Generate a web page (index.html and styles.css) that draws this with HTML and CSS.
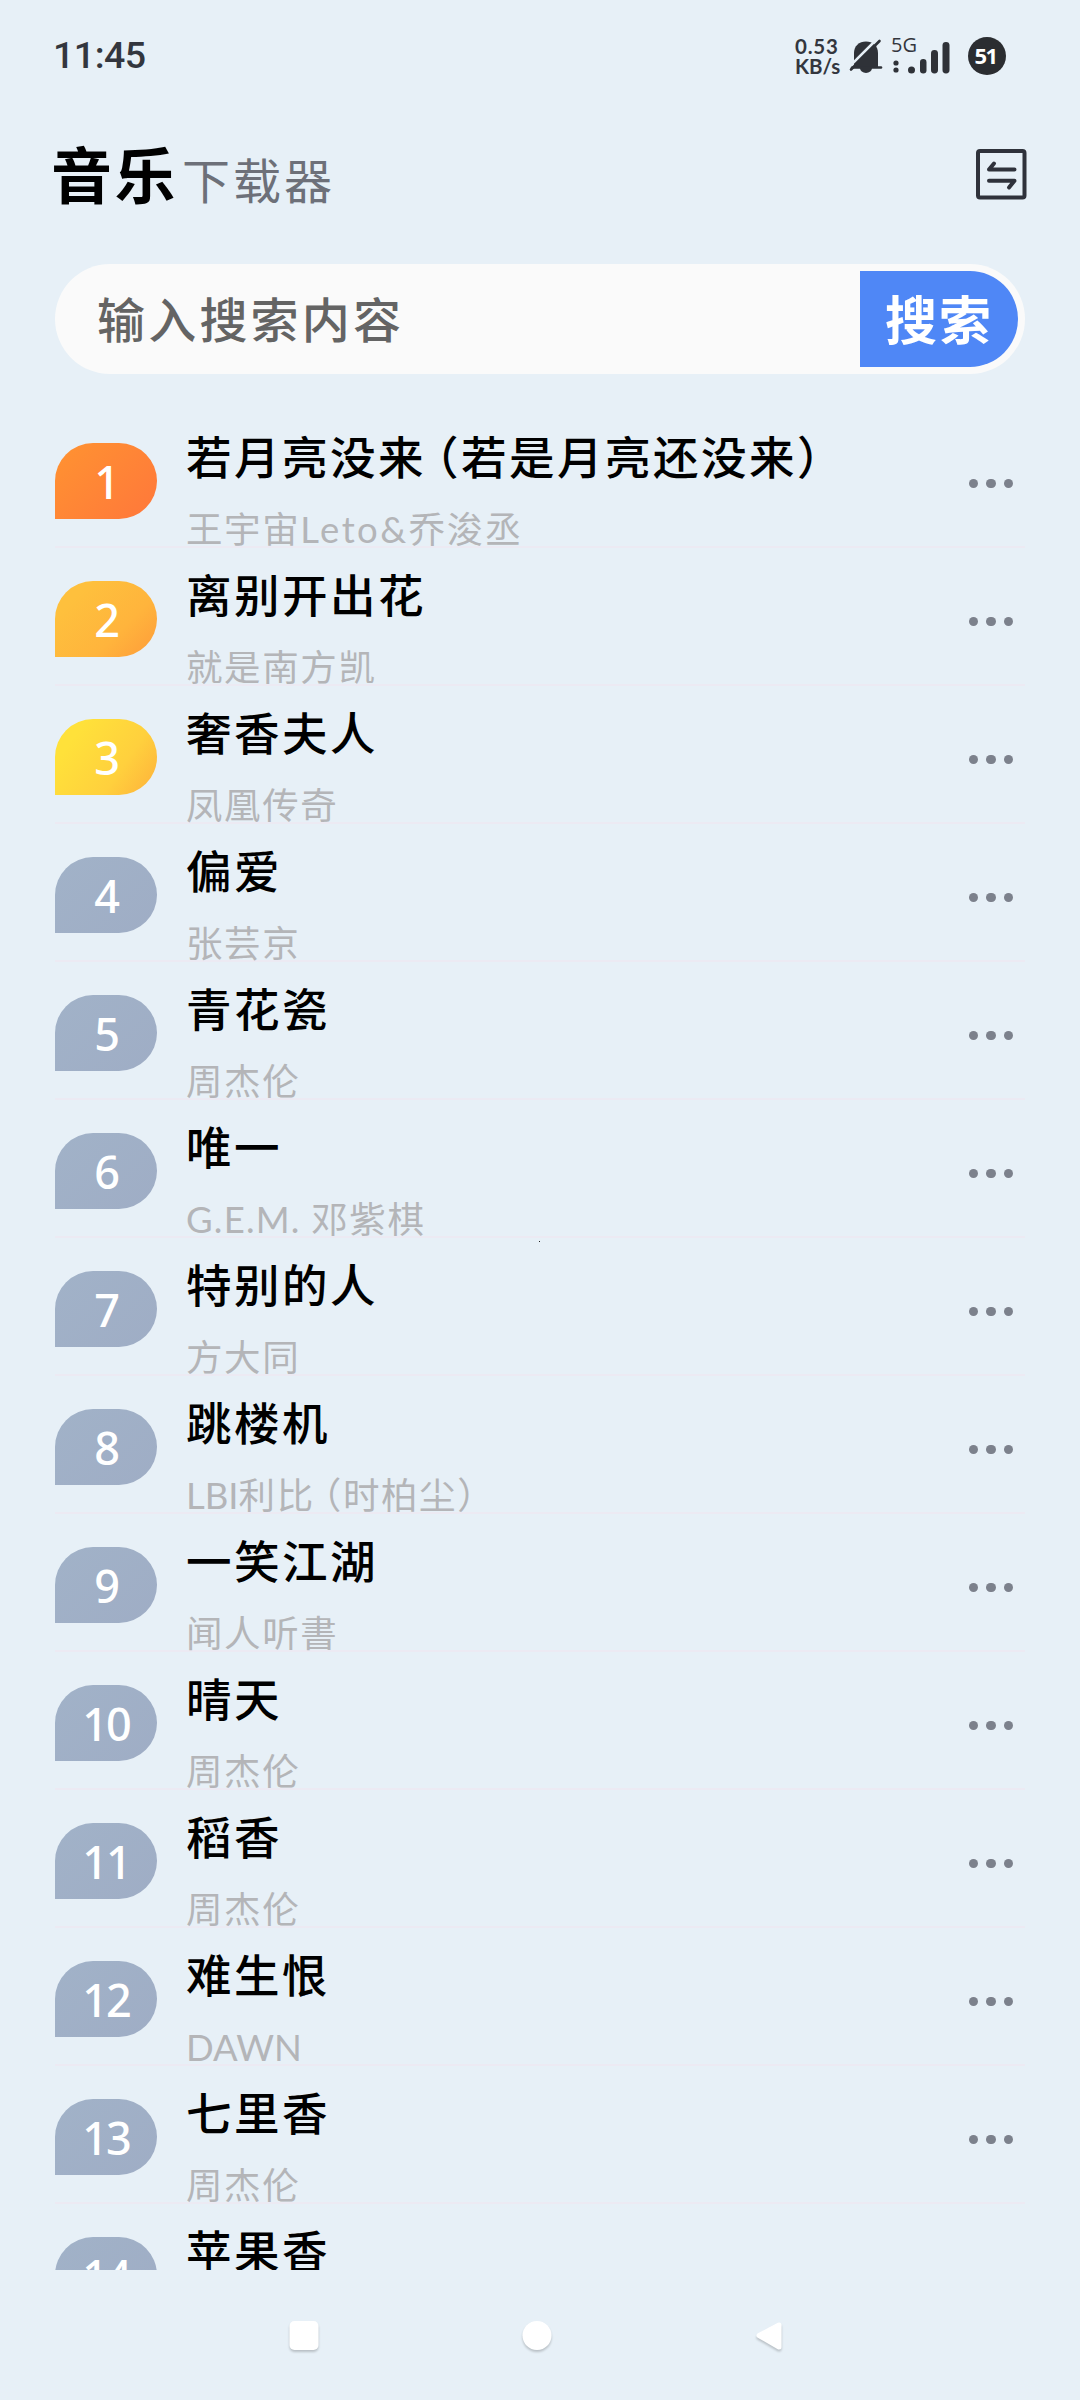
FILE: index.html
```html
<!DOCTYPE html>
<html lang="zh-CN">
<head>
<meta charset="utf-8">
<title>音乐下载器</title>
<link rel="stylesheet" href="styles.css">
</head>
<body>
<div class="screen">
  <header class="status">
    <span class="clock">11:45</span>
    <div class="speed"><span>0.53</span><span>KB/s</span></div>
    <svg class="bell" width="34" height="34" viewBox="0 0 34 34">
      <path d="M5 29V14C5 7 10 2.500 17 2.500S29 7 29 14V29Z" fill="#2f3238"/>
      <path d="M3 28.500H32" stroke="#2f3238" stroke-width="2.600" stroke-linecap="round"/>
      <path d="M11 29H23A6 5 0 0 1 11 29Z" fill="#2f3238"/>
      <path d="M-1 29L28.500 -0.500" stroke="#e7f0f7" stroke-width="2.600"/>
      <path d="M2 30.500L30.500 2" stroke="#2f3238" stroke-width="2.600" stroke-linecap="round"/>
    </svg>
    <div class="mobile">
      <span class="network">5G</span>
      <svg width="60" height="36" viewBox="0 0 60 36">
        <g fill="#2f3238">
          <circle cx="5" cy="25" r="2.600"/><circle cx="5" cy="32" r="2.600"/>
          <circle cx="20.500" cy="32" r="3.500"/>
          <rect x="29" y="21" width="6.500" height="14.500" rx="3.200"/>
          <rect x="40" y="12" width="7" height="23.500" rx="3.400"/>
          <rect x="51.500" y="4" width="7" height="31.500" rx="3.400"/>
        </g>
      </svg>
    </div>
    <span class="battery">51</span>
  </header>

  <div class="heading">
    <h1>音乐</h1>
    <span class="sub">下载器</span>
    <svg class="swap" width="52" height="52" viewBox="0 0 52 52" fill="none" stroke="#2f323b" stroke-width="4" stroke-linecap="round" stroke-linejoin="round">
      <rect x="3" y="3" width="46.500" height="46.500" rx="2"/>
      <path d="M39.500 21.500H14L19 15.500M14 32.700H39.500L34 39.500"/>
    </svg>
  </div>

  <div class="search">
    <span class="placeholder">输入搜索内容</span>
    <button class="go">搜索</button>
  </div>

  <main class="list">
    <div class="row"><span class="rank r1">1</span><div class="song"><b>若月亮没来<span class="open">（</span>若是月亮还没来）</b><small>王宇宙<span class="latin wide">Leto&amp;</span>乔浚丞</small></div><span class="more"><i></i><i></i><i></i></span></div>
    <div class="row"><span class="rank r2">2</span><div class="song"><b>离别开出花</b><small>就是南方凯</small></div><span class="more"><i></i><i></i><i></i></span></div>
    <div class="row"><span class="rank r3">3</span><div class="song"><b>奢香夫人</b><small>凤凰传奇</small></div><span class="more"><i></i><i></i><i></i></span></div>
    <div class="row"><span class="rank">4</span><div class="song"><b>偏爱</b><small>张芸京</small></div><span class="more"><i></i><i></i><i></i></span></div>
    <div class="row"><span class="rank">5</span><div class="song"><b>青花瓷</b><small>周杰伦</small></div><span class="more"><i></i><i></i><i></i></span></div>
    <div class="row"><span class="rank">6</span><div class="song"><b>唯一</b><small><span class="latin dotted">G.E.M. </span>邓紫棋</small></div><span class="more"><i></i><i></i><i></i></span></div>
    <div class="row"><span class="rank">7</span><div class="song"><b>特别的人</b><small>方大同</small></div><span class="more"><i></i><i></i><i></i></span></div>
    <div class="row"><span class="rank">8</span><div class="song"><b>跳楼机</b><small><span class="latin">LBI</span>利比<span class="open">（</span>时柏尘）</small></div><span class="more"><i></i><i></i><i></i></span></div>
    <div class="row"><span class="rank">9</span><div class="song"><b>一笑江湖</b><small>闻人听書</small></div><span class="more"><i></i><i></i><i></i></span></div>
    <div class="row"><span class="rank">10</span><div class="song"><b>晴天</b><small>周杰伦</small></div><span class="more"><i></i><i></i><i></i></span></div>
    <div class="row"><span class="rank">11</span><div class="song"><b>稻香</b><small>周杰伦</small></div><span class="more"><i></i><i></i><i></i></span></div>
    <div class="row"><span class="rank">12</span><div class="song"><b>难生恨</b><small><span class="latin">DAWN</span></small></div><span class="more"><i></i><i></i><i></i></span></div>
    <div class="row"><span class="rank">13</span><div class="song"><b>七里香</b><small>周杰伦</small></div><span class="more"><i></i><i></i><i></i></span></div>
    <div class="row"><span class="rank">14</span><div class="song"><b>苹果香</b></div></div>
  </main>

  <nav class="keys">
    <svg width="32" height="32" viewBox="0 0 32 32"><rect x="1.500" y="1" width="29" height="29" rx="5" fill="#fff"/></svg>
    <svg width="32" height="32" viewBox="0 0 32 32"><circle cx="16" cy="15.500" r="14.500" fill="#fff"/></svg>
    <svg width="32" height="32" viewBox="0 0 32 32"><path d="M5 15.500L25 5V27Z" fill="#fff" stroke="#fff" stroke-width="5" stroke-linejoin="round"/></svg>
  </nav>
  <i class="speck"></i>
</div>
</body>
</html>
```
FILE: styles.css
```css
* { box-sizing: border-box; }
body {
  margin: 0;
  background: #e7f0f7;
  font-family: "Noto Sans CJK SC", sans-serif;
}
.screen {
  position: relative;
  display: flex;
  flex-direction: column;
  width: 1080px;
  height: 2400px;
  overflow: hidden;
}
svg { display: block; flex: none; }

.status {
  display: flex;
  align-items: center;
  height: 112px;
  padding: 0 74px 0 53px;
  color: #33363e;
  font-family: "Open Sans", sans-serif;
}
.clock {
  margin-right: auto;
  padding-bottom: 2px;
  font: 500 37.500px "Roboto", sans-serif;
  letter-spacing: -0.5px;
}
.speed {
  display: flex;
  flex-direction: column;
  width: 54px;
  font: 700 20.500px/20px Lato, sans-serif;
}
.speed span:first-child { letter-spacing: 0.8px; }
.bell { margin-right: 8px; }
.mobile { position: relative; width: 77px; }
.network {
  position: absolute;
  left: 0;
  top: -6px;
  font-size: 20px;
  line-height: 26px;
}
.battery {
  width: 38px;
  height: 38px;
  padding-right: 3px;
  border-radius: 50%;
  background: #2b2d31;
  color: #fff;
  font-size: 22px;
  font-weight: 700;
  line-height: 37px;
  letter-spacing: -1.5px;
  text-align: center;
}

.heading {
  display: flex;
  align-items: baseline;
  height: 152px;
  padding: 0 53px 0 51px;
  line-height: 122px;
}
.heading h1 {
  margin: 0;
  font-size: 61px;
  font-weight: 700;
  letter-spacing: 2.5px;
}
.heading .sub {
  margin-left: 4px;
  color: #6d7079;
  font-size: 48px;
  letter-spacing: 3px;
}
.swap { align-self: flex-start; margin: 36px 0 0 auto; }

.search {
  display: flex;
  align-items: center;
  height: 110px;
  margin: 0 55px;
  padding: 7px 7px 7px 42px;
  border-radius: 55px;
  background: #fafafa;
}
.placeholder {
  margin-right: auto;
  padding-bottom: 3px;
  color: #646464;
  font-size: 48px;
  font-weight: 500;
  line-height: 93px;
  letter-spacing: 3.2px;
}
.go {
  width: 158px;
  height: 96px;
  padding: 0 0 3px;
  border: 0;
  border-radius: 0 48px 48px 0;
  background: #4f87f6;
  color: #fff;
  font: 700 52px/93px "Noto Sans CJK SC", sans-serif;
  letter-spacing: 2px;
}

.list {
  height: 1860px;
  margin: 36px 55px 0;
  overflow: hidden;
}
.row {
  display: flex;
  height: 138px;
  border-bottom: 2px solid #eceaf3;
}
.rank {
  width: 102px;
  height: 76px;
  margin-top: 33px;
  border-radius: 38px 38px 38px 0;
  background: linear-gradient(135deg, #a1b2c8, #9fadc5);
  color: #fff;
  font: 500 45px/78px "Noto Sans", sans-serif;
  text-align: center;
  letter-spacing: -2px;
}
.r1 { background: linear-gradient(135deg, #ff9331, #ff773b); }
.r2 { background: linear-gradient(135deg, #fec03d 20%, #ffb43c 65%, #fe9b3a); }
.r3 { background: linear-gradient(125deg, #ffe13a 20%, #ffd03d 65%, #feb03b); }
.song {
  display: flex;
  flex-direction: column;
  gap: 23px;
  margin: 15px auto 0 29px;
  white-space: nowrap;
}
.song b {
  color: #000;
  font-size: 45.500px;
  font-weight: 500;
  line-height: 60px;
  letter-spacing: 2.500px;
}
.song small {
  color: #b4b5b8;
  font-size: 36.500px;
  line-height: 40px;
  letter-spacing: 1.600px;
}
.song .open { margin-left: -13px; }
.song small .open { margin-left: -10px; }
.latin { font-family: Lato, sans-serif; letter-spacing: 0; }
.latin.wide { letter-spacing: 2.4px; }
.latin.dotted { letter-spacing: 1.2px; }
.more {
  display: flex;
  gap: 8px;
  margin: 69px 12px 0 0;
}
.more i {
  width: 9.400px;
  height: 9.400px;
  border-radius: 50%;
  background: #7c818c;
}

.keys {
  display: flex;
  gap: 201px;
  margin: 50px 0 0 288px;
}
.keys svg { overflow: visible; filter: drop-shadow(0 2px 1px rgba(0, 0, 0, 0.2)); }
.speck {
  position: absolute;
  left: 539px;
  top: 1241px;
  width: 1px;
  height: 1px;
  background: #222;
}
```
